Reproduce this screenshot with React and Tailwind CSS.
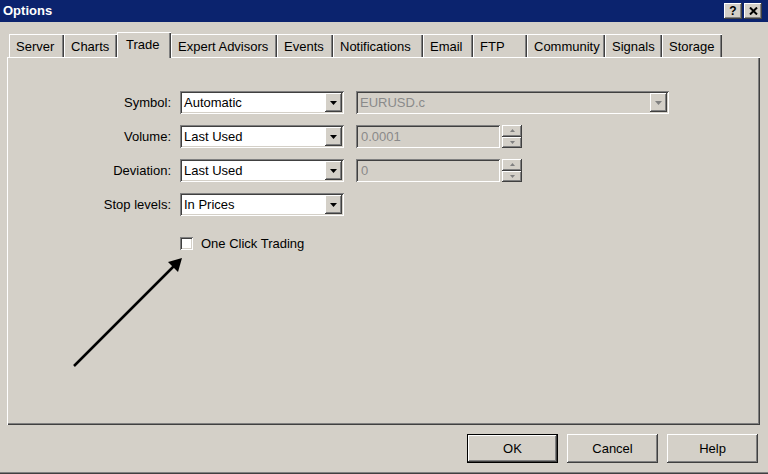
import React from 'react';

const raised =
  'bg-[#d4d0c8] shadow-[inset_-1px_-1px_0_#404040,inset_1px_1px_0_#ffffff,inset_-2px_-2px_0_#808080,inset_2px_2px_0_#d4d0c8]';
const sunken =
  'shadow-[inset_1px_1px_0_#808080,inset_-1px_-1px_0_#ffffff,inset_2px_2px_0_#404040,inset_-2px_-2px_0_#d4d0c8]';

const tabs = [
  { label: 'Server', w: 'w-[55px]' },
  { label: 'Charts', w: 'w-[53px]' },
  { label: 'Trade', w: 'w-[54px]', active: true },
  { label: 'Expert Advisors', w: 'w-[106px]' },
  { label: 'Events', w: 'w-[56px]' },
  { label: 'Notifications', w: 'w-[90px]' },
  { label: 'Email', w: 'w-[50px]' },
  { label: 'FTP', w: 'w-[54px]' },
  { label: 'Community', w: 'w-[78px]' },
  { label: 'Signals', w: 'w-[57px]' },
  { label: 'Storage', w: 'w-[60px]' },
];

// small black/grey triangle for the combo buttons
const Arrow = ({ disabled }) => (
  <svg width="7" height="4" viewBox="0 0 7 4">
    <path d="M0 0 H7 L3.5 4 Z" fill={disabled ? '#808080' : '#000'} />
  </svg>
);

const Combo = ({ value, width, disabled }) => (
  <div className={`flex h-[23px] ${width} ${sunken} p-[2px] ${disabled ? 'bg-[#d4d0c8]' : 'bg-white'}`}>
    <div className={`flex-1 pl-[2px] leading-[19px] ${disabled ? 'text-[#8a8a8a]' : 'text-black'}`}>{value}</div>
    <div className={`w-[17px] h-[19px] flex items-center justify-center ${raised}`}>
      <Arrow disabled={disabled} />
    </div>
  </div>
);

const Spin = ({ value }) => (
  <div className="flex h-[23px] items-start">
    <div className={`h-[23px] w-[144px] ${sunken} bg-[#d4d0c8] px-[5px] leading-[23px] text-[#8a8a8a]`}>{value}</div>
    <div className="ml-[2px] flex flex-col w-[20px] h-[23px]">
      <div className={`flex-1 flex items-center justify-center ${raised}`}>
        <svg width="5" height="3" viewBox="0 0 5 3"><path d="M0 3 H5 L2.5 0 Z" fill="#808080" /></svg>
      </div>
      <div className={`flex-1 flex items-center justify-center ${raised}`}>
        <svg width="5" height="3" viewBox="0 0 5 3"><path d="M0 0 H5 L2.5 3 Z" fill="#808080" /></svg>
      </div>
    </div>
  </div>
);

const Row = ({ label, children }) => (
  <div className="flex items-center h-[23px]">
    <div className="w-[164px] text-right pr-[1px]">{label}</div>
    <div className="ml-[8px] flex items-center gap-[12px]">{children}</div>
  </div>
);

export default function App() {
  return (
    <div
      className="relative w-[768px] h-[474px] bg-[#d4d0c8] text-[13px] text-black flex flex-col overflow-hidden"
      style={{ fontFamily: '"Liberation Sans", Arial, sans-serif' }}
    >
      {/* title bar */}
      <div className="h-[22px] bg-[#0b236e] flex items-center justify-between pl-[3px] pr-[6px]">
        <span className="text-white font-bold text-[13px]">Options</span>
        <div className="flex gap-[2px]">
          <div className={`w-[18px] h-[16px] ${raised} flex items-center justify-center font-bold text-[12px] leading-none`}>?</div>
          <div className={`w-[18px] h-[16px] ${raised} flex items-center justify-center`}>
            <svg width="9" height="8" viewBox="0 0 9 8">
              <path d="M1 0.5 L8 7.5 M8 0.5 L1 7.5" stroke="#000" strokeWidth="2" />
            </svg>
          </div>
        </div>
      </div>

      {/* tab strip */}
      <div className="flex items-end h-[35px] pl-[9px]">
        {tabs.map((t) =>
          t.active ? (
            <div
              key={t.label}
              className={`${t.w} h-[26px] relative z-10 -mb-px bg-[#d4d0c8] border-t border-l border-white shadow-[inset_-1px_0_0_#404040,inset_-2px_0_0_#808080] pl-[8px] pt-[2px] leading-[20px]`}
            >
              {t.label}
            </div>
          ) : (
            <div
              key={t.label}
              className={`${t.w} h-[23px] border-t border-l border-white shadow-[inset_-1px_0_0_#404040,inset_-2px_0_0_#808080] pl-[6px] pt-[3px] leading-[18px]`}
            >
              {t.label}
            </div>
          )
        )}
      </div>

      {/* tab panel */}
      <div className="ml-[7px] mr-[8px] h-[368px] border-t border-l border-white shadow-[inset_-1px_-1px_0_#404040,inset_-2px_-2px_0_#808080] pt-[33px]">
        <div className="flex flex-col gap-[11px]">
          <Row label="Symbol:">
            <Combo value="Automatic" width="w-[164px]" />
            <Combo value="EURUSD.c" width="w-[313px]" disabled />
          </Row>
          <Row label="Volume:">
            <Combo value="Last Used" width="w-[164px]" />
            <Spin value="0.0001" />
          </Row>
          <Row label="Deviation:">
            <Combo value="Last Used" width="w-[164px]" />
            <Spin value="0" />
          </Row>
          <Row label="Stop levels:">
            <Combo value="In Prices" width="w-[164px]" />
          </Row>
        </div>
        <div className="mt-[18px] ml-[172px] flex items-center gap-[8px]">
          <div className={`w-[13px] h-[13px] bg-white ${sunken}`} />
          <span>One Click Trading</span>
        </div>
      </div>

      {/* buttons */}
      <div className="flex justify-end gap-[9px] pr-[10px] mt-[9px]">
        <div className="w-[91px] h-[29px] border border-black">
          <div className={`w-full h-full ${raised} flex items-center justify-center`}>OK</div>
        </div>
        <div className={`w-[91px] h-[29px] ${raised} flex items-center justify-center`}>Cancel</div>
        <div className={`w-[91px] h-[29px] ${raised} flex items-center justify-center`}>Help</div>
      </div>

      <div className="mt-auto h-[2px] bg-[#808080] border-b border-[#404040]" />

      {/* annotation arrow drawn over the panel */}
      <svg className="absolute left-0 top-0 pointer-events-none" width="768" height="474">
        <line x1="74" y1="366" x2="176" y2="264" stroke="#000" strokeWidth="2.5" />
        <path d="M182 258 L168 262 L178 272 Z" fill="#000" />
      </svg>
    </div>
  );
}
